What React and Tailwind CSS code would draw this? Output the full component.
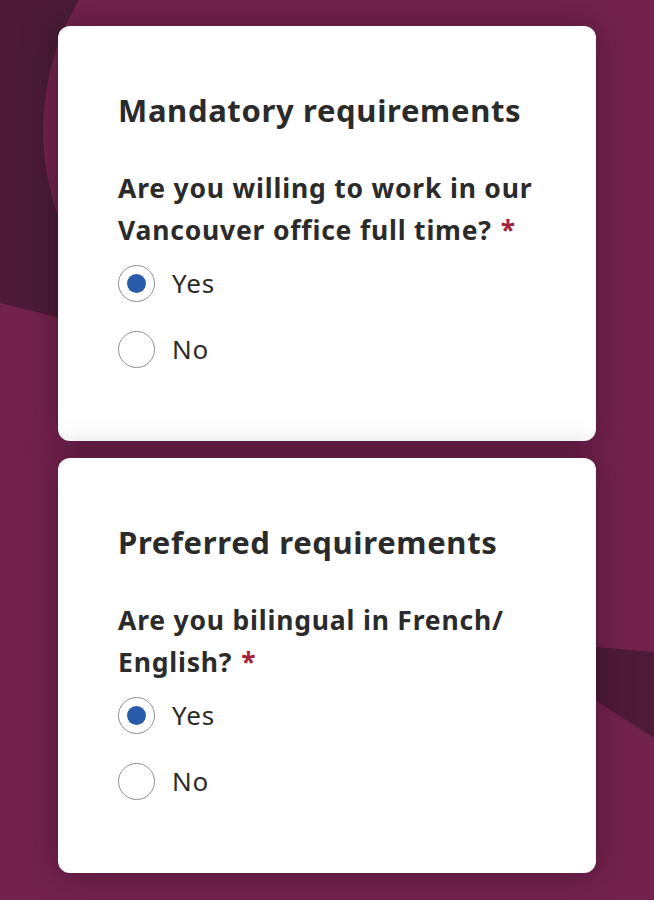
import React, { useState } from 'react';

const questions = [
  {
    id: 'mandatory',
    title: 'Mandatory requirements',
    question: 'Are you willing to work in our Vancouver office full time?',
  },
  {
    id: 'preferred',
    title: 'Preferred requirements',
    question: 'Are you bilingual in French/ English?',
  },
];

function Radio({ checked, label, onClick }) {
  return (
    <button type="button" onClick={onClick} className="flex items-center h-[40px] gap-[17px] text-left">
      <span className="w-[37px] h-[37px] rounded-full border-[1.5px] border-[#8f8f8f] bg-white flex items-center justify-center">
        {checked && <span className="w-[19px] h-[19px] rounded-full bg-[#2a5ba8]" />}
      </span>
      <span className="text-[26px] tracking-[0.8px] text-[#2b2b2b] leading-none">{label}</span>
    </button>
  );
}

function Card({ title, question, value, onChange }) {
  return (
    <div className="bg-white rounded-xl shadow-[0_0_36px_rgba(20,0,10,0.38)] pl-[60px] pr-[30px] pt-[64px] pb-[72px]">
      <h2 className="text-[31px] tracking-[0.65px] leading-[40px] font-bold text-[#2b2b2b]">{title}</h2>
      <p className="mt-[37px] text-[26.5px] tracking-[0.8px] leading-[42px] font-bold text-[#2b2b2b]">
        {question}
        <span className="text-[#a3233a] ml-[9px]">*</span>
      </p>
      <div className="mt-[12px] flex flex-col gap-[26px] items-start">
        <Radio checked={value === 'yes'} label="Yes" onClick={() => onChange('yes')} />
        <Radio checked={value === 'no'} label="No" onClick={() => onChange('no')} />
      </div>
    </div>
  );
}

export default function App() {
  const [answers, setAnswers] = useState({ mandatory: 'yes', preferred: 'yes' });

  return (
    <div
      className="relative min-h-[900px] w-full overflow-hidden bg-[#73224e]"
      style={{ fontFamily: '"Noto Sans", "Open Sans", sans-serif' }}
    >
      {/* decorative background shapes */}
      <svg className="absolute inset-0" width="654" height="900" viewBox="0 0 654 900" aria-hidden="true">
        <path d="M0 0 L79 0 A253 253 0 0 0 158 342 L0 303 Z" fill="#4b1b36" />
        <path d="M540 642 L654 652 L654 738 L540 665 Z" fill="#4e1b37" />
      </svg>

      <div className="relative flex flex-col gap-[17px] px-[58px] pt-[26px] pb-[27px]">
        {questions.map(q => (
          <Card
            key={q.id}
            title={q.title}
            question={q.question}
            value={answers[q.id]}
            onChange={v => setAnswers(prev => ({ ...prev, [q.id]: v }))}
          />
        ))}
      </div>
    </div>
  );
}
